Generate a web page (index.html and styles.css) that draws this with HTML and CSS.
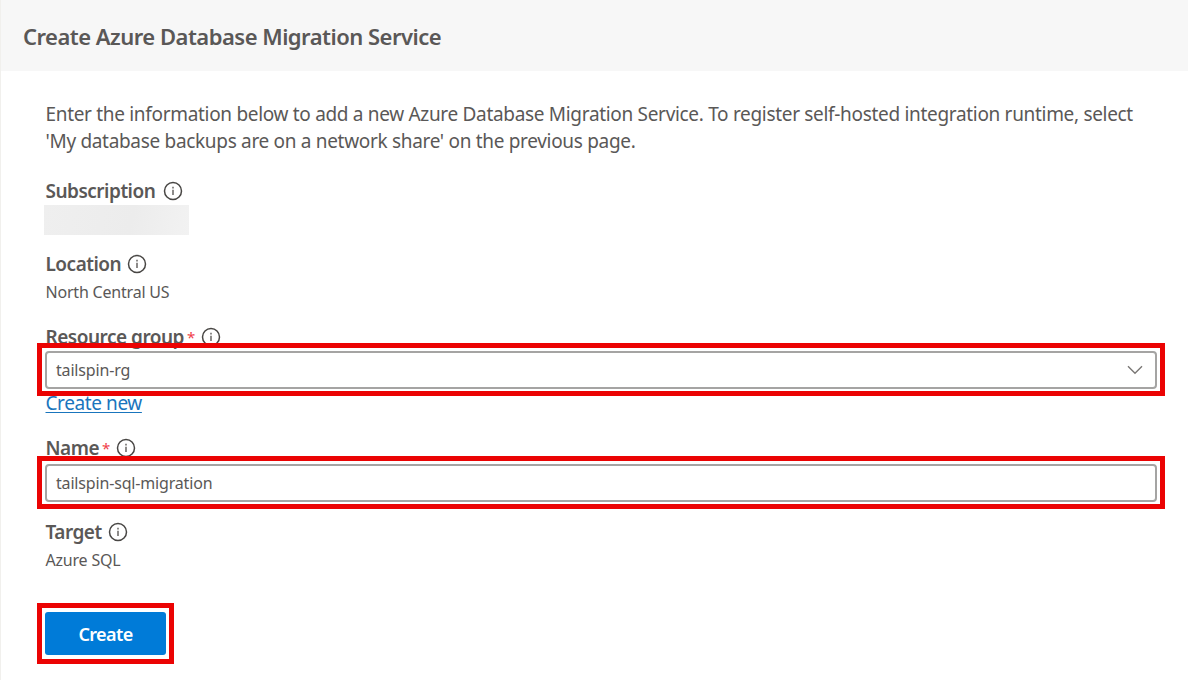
FILE: index.html
```html
<!DOCTYPE html>
<html lang="en">
<head>
<meta charset="utf-8">
<title>Create Azure Database Migration Service</title>
<link rel="stylesheet" href="styles.css">
</head>
<body>
<svg class="defs" aria-hidden="true">
  <symbol id="info" viewBox="0 0 20 20">
    <circle cx="10" cy="10" r="8.5" fill="none" stroke="#484644" stroke-width="1.5"/>
    <path d="M10 8.7v5.2M10 5.7v1.7" fill="none" stroke="#797775" stroke-width="1.7"/>
  </symbol>
</svg>
<div class="panel">
  <header class="panel-header"><h1 class="title">Create Azure Database Migration Service</h1></header>
  <main class="content">
    <p class="intro">Enter the information below to add a new Azure Database Migration Service. To register self-hosted integration runtime, select<br>'My database backups are on a network share' on the previous page.</p>

    <section class="group subscription">
      <div class="label"><span>Subscription</span><svg class="info"><use href="#info"/></svg></div>
      <div class="redacted"></div>
    </section>

    <section class="group location">
      <div class="label"><span>Location</span><svg class="info"><use href="#info"/></svg></div>
      <div class="value">North Central US</div>
    </section>

    <section class="group resource">
      <div class="label"><span>Resource group</span><i class="required">*</i><svg class="info"><use href="#info"/></svg></div>
      <div class="field highlight"><span>tailspin-rg</span><svg class="chevron" viewBox="0 0 16 10"><path d="M1 1.2l7 7 7-7"/></svg></div>
      <div class="link-row"><a class="link" href="#">Create new</a></div>
    </section>

    <section class="group name">
      <div class="label"><span>Name</span><i class="required">*</i><svg class="info"><use href="#info"/></svg></div>
      <div class="field highlight"><span>tailspin-sql-migration</span></div>
    </section>

    <section class="group target">
      <div class="label"><span>Target</span><svg class="info"><use href="#info"/></svg></div>
      <div class="value">Azure SQL</div>
    </section>

    <button class="create highlight">Create</button>
  </main>
</div>
</body>
</html>
```
FILE: styles.css
```css
* { box-sizing: border-box; }
body { margin: 0; background: #fff; color: #5a5857; font-family: "Noto Sans", "Open Sans", sans-serif; overflow: hidden; }
.defs { display: none; }
.panel { height: 680px; border-left: 1px solid #f1f0ed; }
.panel-header { height: 71px; padding-left: 22px; background: #f7f7f7; display: flex; align-items: center; }
.title { margin: 0; font-size: 22px; font-weight: 600; line-height: 30px; letter-spacing: -0.51px; white-space: nowrap; }
.content { padding: 30px 31px 0 44px; }
.intro { margin: 0; padding-left: 0.5px; font-size: 19px; line-height: 27px; letter-spacing: -0.315px; white-space: nowrap; }
.label { height: 28px; padding-left: 0.5px; display: flex; align-items: center; font-size: 19px; font-weight: 600; line-height: 28px; letter-spacing: -0.5px; white-space: nowrap; }
.info { width: 20px; height: 20px; margin-left: 7.5px; flex: none; }
.location .info, .target .info { margin-left: 6px; }
.required { color: #f0404a; font-style: normal; font-weight: 400; font-size: 15px; margin-left: 3px; }
.required + .info { margin-left: 6px; }
.value { height: 28px; padding-left: 0.5px; font-size: 16px; line-height: 28px; letter-spacing: -0.2px; }
.subscription { margin-top: 22px; }
.redacted { width: 145px; height: 30px; margin-left: -1px; background: linear-gradient(100deg, #efefef, #ececec 60%, #f2f2f2); }
.location { margin-top: 15px; }
.resource { margin-top: 17px; }
.field { position: relative; height: 38px; padding: 0 12px 0 9px; display: flex; align-items: center; justify-content: space-between; border: 2px solid #a5a4a3; border-radius: 4px; background: #fff; font-size: 16px; letter-spacing: -0.17px; }
.highlight::after { content: ""; position: absolute; border: 5px solid #eb0303; pointer-events: none; }
.field::after { inset: -10px -10px -9px; }
.chevron { width: 16px; height: 10px; fill: none; stroke: #7a7775; stroke-width: 1.4; }
.link-row { height: 28px; padding-left: 0.5px; font-size: 19px; line-height: 28px; letter-spacing: -0.4px; }
.link { color: #1975bd; text-decoration: underline; text-decoration-thickness: 1px; text-underline-offset: 2px; }
.name { margin-top: 17px; }
.name .label { margin-bottom: 2px; }
.name .field { height: 38px; }
.target { margin-top: 16px; }
.create { position: relative; display: block; margin: 38px 0 0; width: 121px; height: 43px; padding: 0; border: 0; border-radius: 3px; background: #007bd8; color: #fff; font: 600 18px "Noto Sans", sans-serif; letter-spacing: -0.6px; }
.create::after { inset: -9px -8px; }
```
